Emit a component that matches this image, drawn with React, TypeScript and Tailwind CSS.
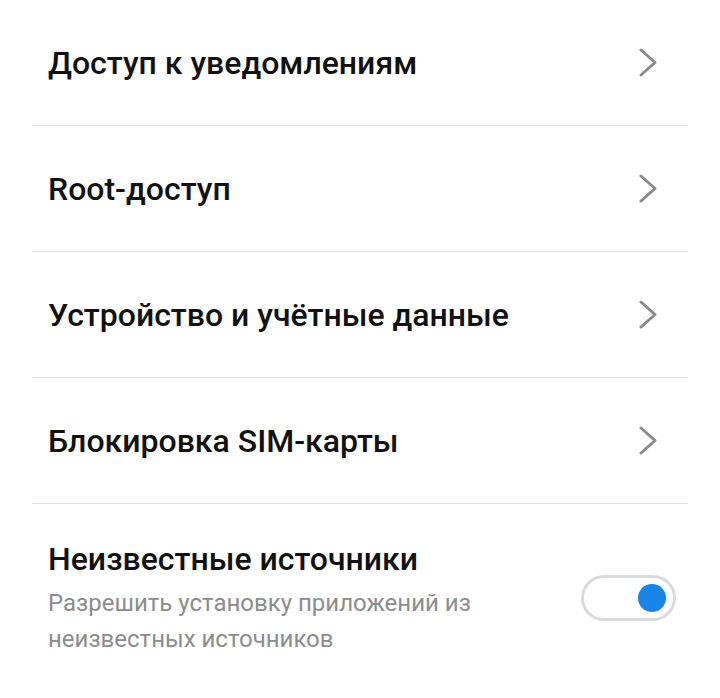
const rows = [
  "Доступ к уведомлениям",
  "Root-доступ",
  "Устройство и учётные данные",
  "Блокировка SIM-карты",
];

function Chevron() {
  return (
    <svg width="19" height="29" viewBox="0 0 19 29" fill="none" className="shrink-0">
      <path
        d="M2 2 L16 14.5 L2 27"
        stroke="#8a8a8a"
        strokeWidth="3"
        strokeLinecap="round"
        strokeLinejoin="round"
      />
    </svg>
  );
}

export default function App() {
  return (
    <div
      className="w-[720px] h-[698px] bg-white overflow-hidden"
      style={{ fontFamily: "Roboto, 'Noto Sans', sans-serif" }}
    >
      <div className="mx-8">
        {rows.map((title) => (
          <div
            key={title}
            className="h-[126px] flex items-center justify-between pl-4 pr-[30px] border-b border-[#e3e3e3]"
          >
            <span className="text-[32px] font-medium text-[#111]">{title}</span>
            <Chevron />
          </div>
        ))}
        <div className="flex items-center justify-between pl-4 pr-3 pt-[35px]">
          <div className="flex flex-col">
            <span className="text-[32px] leading-[40px] font-medium text-[#111]">
              Неизвестные источники
            </span>
            <span className="mt-[6px] text-[24px] leading-[36px] text-[#8c8c8c] w-[460px]">
              Разрешить установку приложений из неизвестных источников
            </span>
          </div>
          <div className="w-[95px] h-[46px] rounded-full border-[3px] border-[#dadada] flex items-center justify-end pr-[7px]">
            <div className="w-[28px] h-[28px] rounded-full bg-[#1784e6]" />
          </div>
        </div>
      </div>
    </div>
  );
}
